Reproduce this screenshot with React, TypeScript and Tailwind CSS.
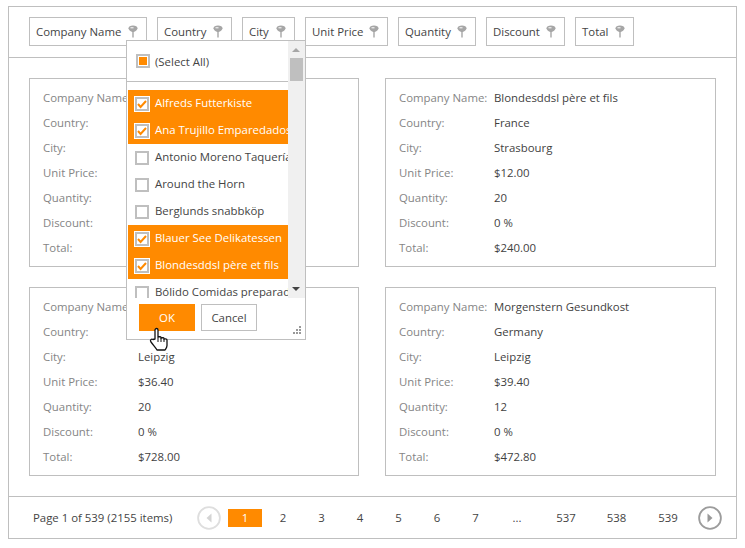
import React from 'react';

const chips = [
  { name: 'Company Name', width: 'w-[118px]' },
  { name: 'Country', width: 'w-[75px]' },
  { name: 'City', width: 'w-[53px]' },
  { name: 'Unit Price', width: 'w-[83px]' },
  { name: 'Quantity', width: 'w-[78px]' },
  { name: 'Discount', width: 'w-[79px]' },
  { name: 'Total', width: 'w-[59px]' },
];
const labels = ['Company Name:', 'Country:', 'City:', 'Unit Price:', 'Quantity:', 'Discount:', 'Total:'];

const cards = [
  ['Alfreds Futterkiste', 'Germany', 'Berlin', '$18.00', '15', '0 %', '$270.00'],
  ['Blondesddsl père et fils', 'France', 'Strasbourg', '$12.00', '20', '0 %', '$240.00'],
  ['Morgenstern Gesundkost', 'Germany', 'Leipzig', '$36.40', '20', '0 %', '$728.00'],
  ['Morgenstern Gesundkost', 'Germany', 'Leipzig', '$39.40', '12', '0 %', '$472.80'],
];

const items = [
  { name: 'Alfreds Futterkiste', on: true },
  { name: 'Ana Trujillo Emparedados y helados', on: true },
  { name: 'Antonio Moreno Taquería', on: false },
  { name: 'Around the Horn', on: false },
  { name: 'Berglunds snabbköp', on: false },
  { name: 'Blauer See Delikatessen', on: true },
  { name: 'Blondesddsl père et fils', on: true },
  { name: 'Bólido Comidas preparadas', on: false },
];

function Pin() {
  return (
    <svg width="10" height="13" viewBox="0 0 10 13" className="shrink-0">
      <path d="M.5 3.200C.5 1.500 2.500.5 5 .5s4.500 1 4.500 2.700C9.500 5 7 6.500 5.800 7H4.200C3 6.500.5 5 .5 3.200z" fill="#a6a6a6" />
      <path d="M5 6v6.500" stroke="#a6a6a6" strokeWidth="1.400" />
      <path d="M2.500 2.800h3" stroke="#fff" strokeWidth="1" />
    </svg>
  );
}

function Check({ on }: { on: boolean }) {
  if (!on) {
    return <span className="w-[14px] h-[14px] border-2 border-[#bfbfbf] bg-white shrink-0 ml-[7px]" />;
  }
  return (
    <span className="w-[16px] h-[16px] border border-white bg-[#bfbfbf] p-[2px] shrink-0 ml-[6px]">
      <span className="flex w-[10px] h-[10px] bg-white items-center justify-center">
        <svg width="10" height="10" viewBox="0 0 10 10">
          <path d="M1 5l2.600 3L9 2" fill="none" stroke="#ff8a00" strokeWidth="2" />
        </svg>
      </span>
    </span>
  );
}

function Card({ values }: { values: string[] }) {
  return (
    <div className="border border-[#bfbfbf] h-[189px] pl-[13px] pt-[6px]">
      {labels.map((label, i) => (
        <div key={label} className="flex h-[25px] items-center whitespace-nowrap">
          <span className="w-[95px] text-[#858585]">{label}</span>
          <span className="text-[#3f3f3f]">{values[i]}</span>
        </div>
      ))}
    </div>
  );
}

function Arrow({ right, color, ring }: { right?: boolean; color: string; ring: string }) {
  return (
    <svg width="24" height="24" viewBox="0 0 24 24" className="shrink-0">
      <circle cx="12" cy="12" r="10.900" fill="none" stroke={ring} strokeWidth="1.800" />
      <path d={right ? 'M9.500 7.500l5 4.500-5 4.500z' : 'M14.500 7.500l-5 4.500 5 4.500z'} fill={color} />
    </svg>
  );
}

function Hand() {
  return (
    <svg width="21" height="26" viewBox="0 0 21 26">
      <path
        d="M6 12V3c0-2 3-2 3 0v7.500c0-1 3-1 3 0v1c0-1 3-1 3 0v1c0-1 3-1 3 .5v5.500c0 2-1 3-2 4.500H8c-1-2-3-4-6-8-1.500-2 .5-3.500 2-2.500z"
        fill="#fff"
        stroke="#111"
        strokeWidth="1.300"
        strokeLinejoin="round"
      />
      <path d="M9 11v4M12 11.500V15M15 12.500V15" stroke="#111" strokeWidth="1" />
    </svg>
  );
}

export default function App() {
  return (
    <div className="w-[745px] h-[548px] bg-white pt-[6px] pl-[8px] text-[11.4px] font-['Open_Sans','Noto_Sans',sans-serif] relative overflow-hidden">
      <div className="w-[729px] h-[533px] border border-[#bfbfbf] flex flex-col">
        <div className="h-[51px] border-b border-[#bfbfbf] flex gap-[10px] pl-[20px] pt-[10px] shrink-0">
          {chips.map((chip) => (
            <div
              key={chip.name}
              className={`${chip.width} h-[29px] border border-[#bfbfbf] flex items-center justify-between pl-[6px] pr-[8px] text-[#444] whitespace-nowrap`}
            >
              {chip.name}
              <Pin />
            </div>
          ))}
        </div>

        <div className="flex-1 grid grid-cols-[330px_331px] gap-x-[26px] gap-y-[20px] pl-[20px] pt-[20px] content-start">
          {cards.map((values, i) => (
            <Card key={i} values={values} />
          ))}
        </div>

        <div className="h-[42px] border-t border-[#bfbfbf] flex items-center pl-[24px] text-[#444] whitespace-nowrap shrink-0">
          <span className="w-[164px]">Page 1 of 539 (2155 items)</span>
          <Arrow color="#d4d4d4" ring="#dedede" />
          <span className="w-[34px] h-[18px] ml-[7px] bg-[#ff8a00] text-white text-center leading-[18px]">1</span>
          <span className="w-[42px] text-center">2</span>
          <span className="w-[35px] text-center">3</span>
          <span className="w-[42px] text-center">4</span>
          <span className="w-[35px] text-center">5</span>
          <span className="w-[42px] text-center">6</span>
          <span className="w-[35px] text-center">7</span>
          <span className="w-[48px] text-center">...</span>
          <span className="w-[50px] text-center">537</span>
          <span className="w-[51px] text-center">538</span>
          <span className="w-[52px] text-center">539</span>
          <span className="ml-[4px]">
            <Arrow right color="#999" ring="#9c9c9c" />
          </span>
        </div>
      </div>

      {/* filter popup */}
      <div className="absolute left-[126px] top-[40px] w-[180px] h-[300px] bg-white border border-[#bfbfbf] flex flex-col text-[#444]">
        <div className="relative flex-1 min-h-0">
          <div className="absolute right-0 top-0 bottom-[41px] w-[17px] bg-[#f0f0f0]">
            <div className="absolute left-[2px] top-[17px] w-[13px] h-[23px] bg-[#bfbfbf]" />
            <div className="absolute left-[4px] top-[7px] w-0 h-0 border-x-[4px] border-x-transparent border-b-[4px] border-b-[#a6a6a6]" />
            <div className="absolute left-[4px] bottom-[7px] w-0 h-0 border-x-[4px] border-x-transparent border-t-[4px] border-t-[#444]" />
          </div>
          <div className="w-[162px] h-[41px] border-b border-[#bfbfbf] flex items-center pl-[9px] gap-[5px]">
            <span className="flex items-center justify-center w-[14px] h-[14px] border-2 border-[#bfbfbf] bg-white">
              <span className="w-[8px] h-[8px] bg-[#ff8a00]" />
            </span>
            <span className="pt-[2px]">(Select All)</span>
          </div>
          <div className="w-[160px] ml-[1px] mt-[8px] h-[208px] overflow-hidden">
            {items.map((item) => (
              <div
                key={item.name}
                className={
                  item.on
                    ? 'h-[27px] flex items-center bg-[#ff8a00] text-white whitespace-nowrap overflow-hidden'
                    : 'h-[27px] flex items-center whitespace-nowrap overflow-hidden'
                }
              >
                <Check on={item.on} />
                <span className={item.on ? 'ml-[5px] -translate-y-px' : 'ml-[6px] -translate-y-px'}>{item.name}</span>
              </div>
            ))}
          </div>
          <div className="flex gap-[6px] pl-[12px] mt-[6px]">
            <div className="w-[56px] h-[27px] bg-[#ff8a00] text-white flex items-center justify-center">OK</div>
            <div className="w-[56px] h-[27px] border border-[#bfbfbf] flex items-center justify-center">Cancel</div>
          </div>
          <svg width="12" height="12" viewBox="0 0 12 12" className="absolute right-[2px] bottom-[2px]">
            <path d="M8 1h2v2H8zM5 4h2v2H5zM8 4h2v2H8zM2 7h2v2H2zM5 7h2v2H5zM8 7h2v2H8z" fill="#999" />
          </svg>
        </div>
      </div>

      <div className="absolute left-[149px] top-[327px]">
        <Hand />
      </div>
    </div>
  );
}
